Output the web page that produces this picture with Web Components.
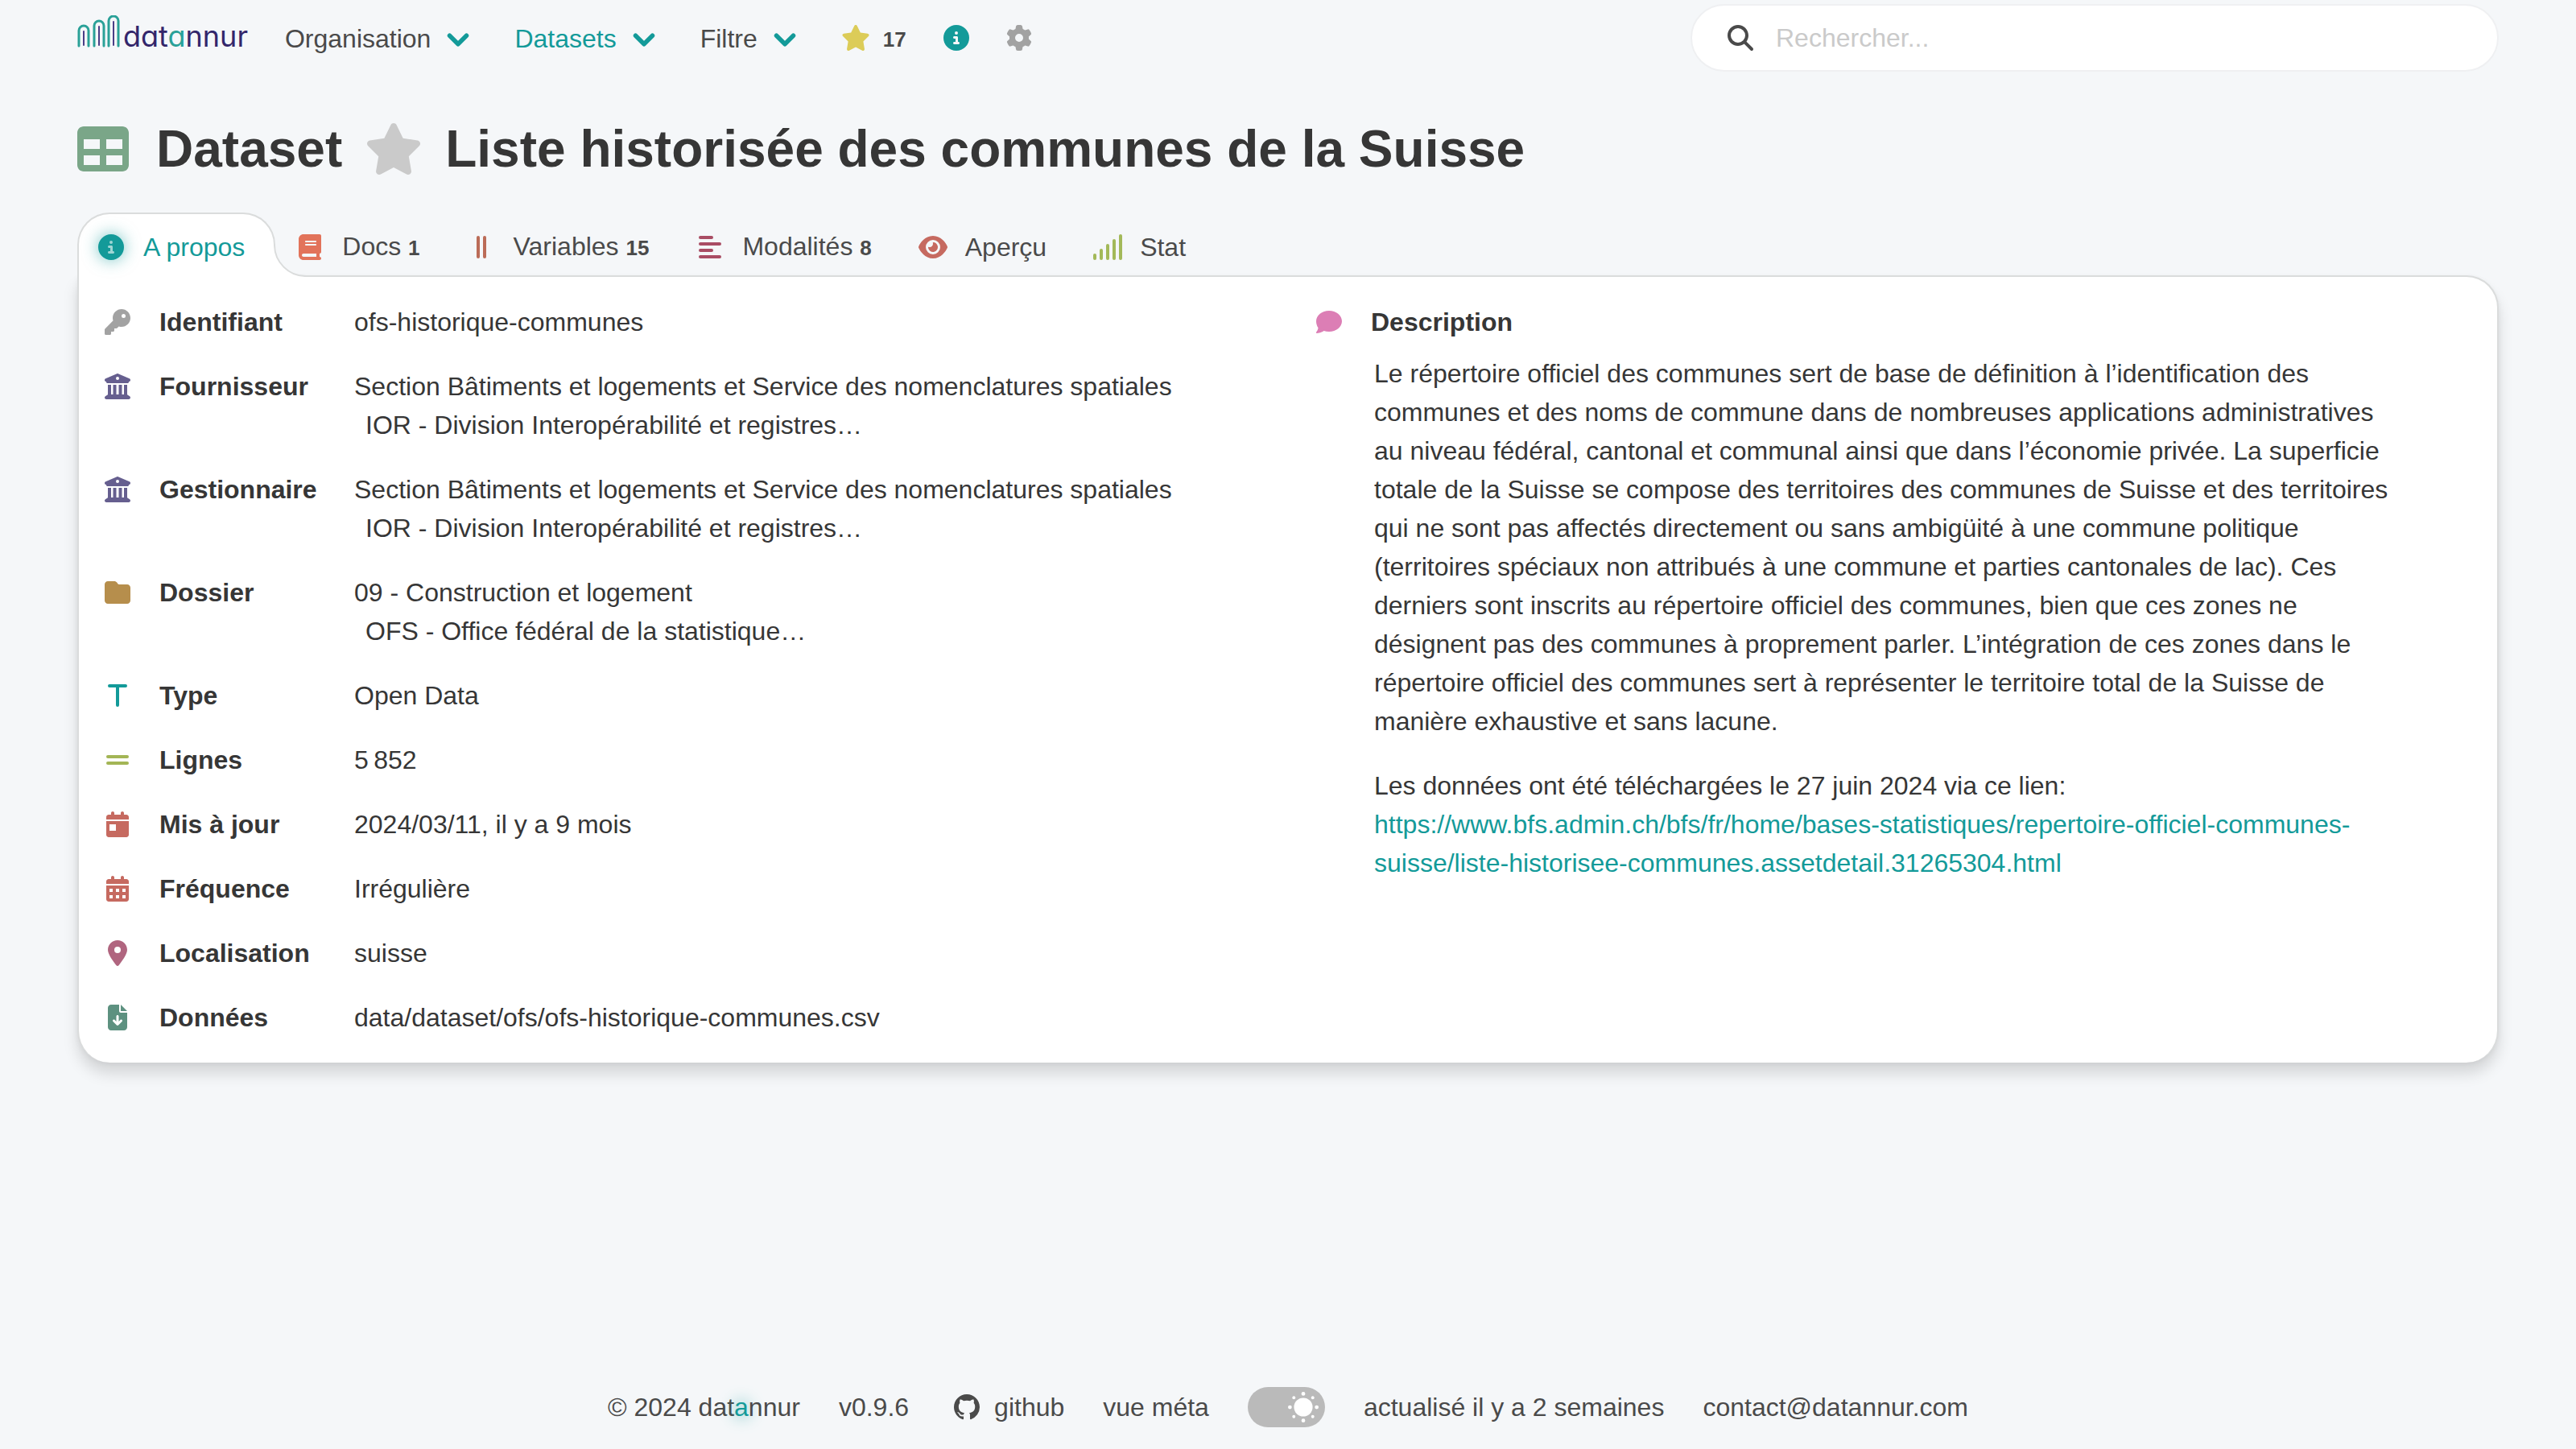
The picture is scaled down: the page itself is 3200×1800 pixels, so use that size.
<!DOCTYPE html>
<html lang="fr">
<head>
<meta charset="utf-8">
<title>datannur | Liste historisée des communes de la Suisse</title>
<style>
  :root {
    --bg: #f5f7f9;
    --text: #363636;
    --soft: #4a4a4a;
    --teal: #139a99;
    --line: #dadcdc;
    --gutter: 96px;
  }
  body {
    margin: 0;
    background: var(--bg);
    color: var(--text);
    font-family: "Liberation Sans", Arial, sans-serif;
    font-size: 32px;
    line-height: 48px;
  }
</style>
</head>
<body>
<dn-app>
  <dn-header slot="header"></dn-header>
  <dn-title kind="Dataset">Liste historisée des communes de la Suisse</dn-title>
  <dn-tabs>
    <dn-tab icon="info" color="#139a99" active>A propos</dn-tab>
    <dn-tab icon="book" color="#e2735a" count="1">Docs</dn-tab>
    <dn-tab icon="columns" color="#bb6c58" count="15">Variables</dn-tab>
    <dn-tab icon="align" color="#a94d64" count="8">Modalités</dn-tab>
    <dn-tab icon="eye" color="#c66a60">Aperçu</dn-tab>
    <dn-tab icon="signal" color="#a3b959">Stat</dn-tab>
  </dn-tabs>
  <dn-card>
    <dn-facts></dn-facts>
    <dn-description heading="Description">
      <p>Le répertoire officiel des communes sert de base de définition à l’identification des communes et des noms de commune dans de nombreuses applications administratives au niveau fédéral, cantonal et communal ainsi que dans l’économie privée. La superficie totale de la Suisse se compose des territoires des communes de Suisse et des territoires qui ne sont pas affectés directement ou sans ambigüité à une commune politique (territoires spéciaux non attribués à une commune et parties cantonales de lac). Ces derniers sont inscrits au répertoire officiel des communes, bien que ces zones ne désignent pas des communes à proprement parler. L’intégration de ces zones dans le répertoire officiel des communes sert à représenter le territoire total de la Suisse de manière exhaustive et sans lacune.</p>
      <p>Les données ont été téléchargées le 27 juin 2024 via ce lien:<br><a href="https://www.bfs.admin.ch/bfs/fr/home/bases-statistiques/repertoire-officiel-communes-suisse/liste-historisee-communes.assetdetail.31265304.html">https://www.bfs.admin.ch/bfs/fr/home/bases-statistiques/repertoire-officiel-communes-suisse/liste-historisee-communes.assetdetail.31265304.html</a></p>
    </dn-description>
  </dn-card>
  <dn-footer slot="footer"></dn-footer>
</dn-app>

<script>
const bar = (x, y, w, h) => `<rect x="${x}" y="${y}" width="${w}" height="${h}" rx="32"/>`;
const calendarTop = 'M128 0c17.7 0 32 14.3 32 32V64H288V32c0-17.7 14.3-32 32-32s32 14.3 32 32V64h48c26.5 0 48 21.5 48 48v48H0V112C0 85.5 21.5 64 48 64H96V32c0-17.7 14.3-32 32-32zM0 192H448V464c0 26.5-21.5 48-48 48H48c-26.5 0-48-21.5-48-48V192z';
const square = (x, y, s) => `M${x} ${y}v${s}h${s}v-${s}z`;

const ICONS = {
  star: [576, '<path d="M316.9 18C311.6 7 300.4 0 288.1 0s-23.4 7-28.8 18L195 150.3 51.4 171.5c-12 1.8-22 10.2-25.7 21.7s-.7 24.2 7.9 32.7L137.8 329 113.2 474.7c-2 12 3 24.2 12.9 31.3s23 8 33.8 2.3l128.3-68.5 128.3 68.5c10.8 5.7 23.9 4.9 33.8-2.3s14.9-19.3 12.9-31.3L438.5 329 542.7 225.9c8.6-8.5 11.7-21.2 7.9-32.7s-13.7-19.9-25.7-21.7L381.2 150.3 316.9 18z"/>'],
  info: [512, '<path d="M256 512A256 256 0 1 0 256 0a256 256 0 1 0 0 512zM216 336h24V272H216c-13.3 0-24-10.7-24-24s10.7-24 24-24h48c13.3 0 24 10.7 24 24v88h8c13.3 0 24 10.7 24 24s-10.7 24-24 24H216c-13.3 0-24-10.7-24-24s10.7-24 24-24zm40-208a32 32 0 1 1 0 64 32 32 0 1 1 0-64z"/>'],
  gear: [512, '<path d="M495.9 166.6c3.2 8.7 .5 18.4-6.4 24.6l-43.3 39.4c1.1 8.3 1.7 16.8 1.7 25.4s-.6 17.1-1.7 25.4l43.3 39.4c6.9 6.2 9.6 15.9 6.4 24.6c-4.4 11.9-9.7 23.3-15.8 34.3l-4.7 8.1c-6.6 11-14 21.4-22.1 31.2c-5.9 7.2-15.7 9.6-24.5 6.8l-55.7-17.7c-13.4 10.3-28.2 18.9-44 25.4l-12.5 57.1c-2 9.1-9 16.3-18.2 17.8c-13.8 2.3-28 3.5-42.5 3.5s-28.7-1.2-42.5-3.5c-9.2-1.5-16.2-8.7-18.2-17.8l-12.5-57.1c-15.8-6.5-30.6-15.1-44-25.4L83.1 425.9c-8.8 2.8-18.6 .3-24.5-6.8c-8.1-9.8-15.5-20.2-22.1-31.2l-4.7-8.1c-6.1-11-11.4-22.4-15.8-34.3c-3.2-8.7-.5-18.4 6.4-24.6l43.3-39.4C64.6 273.1 64 264.6 64 256s.6-17.1 1.7-25.4L22.4 191.2c-6.9-6.2-9.6-15.9-6.4-24.6c4.4-11.9 9.7-23.3 15.8-34.3l4.7-8.1c6.6-11 14-21.4 22.1-31.2c5.9-7.2 15.7-9.6 24.5-6.8l55.7 17.7c13.4-10.3 28.2-18.9 44-25.4l12.5-57.1c2-9.1 9-16.3 18.2-17.8C227.3 1.2 241.5 0 256 0s28.7 1.2 42.5 3.5c9.2 1.5 16.2 8.7 18.2 17.8l12.5 57.1c15.8 6.5 30.6 15.1 44 25.4l55.7-17.7c8.8-2.8 18.6-.3 24.5 6.8c8.1 9.8 15.5 20.2 22.1 31.2l4.7 8.1c6.1 11 11.4 22.4 15.8 34.3zM256 336a80 80 0 1 0 0-160 80 80 0 1 0 0 160z"/>'],
  search: [512, '<path d="M416 208c0 45.9-14.9 88.3-40 122.7L502.6 457.4c12.5 12.5 12.5 32.8 0 45.3s-32.8 12.5-45.3 0L330.7 376c-34.4 25.2-76.8 40-122.7 40C93.1 416 0 322.9 0 208S93.1 0 208 0S416 93.1 416 208zM208 352a144 144 0 1 0 0-288 144 144 0 1 0 0 288z"/>'],
  chevron: [512, '<path d="M88 196L256 364L424 196" fill="none" stroke="currentColor" stroke-width="88" stroke-linecap="round" stroke-linejoin="round"/>'],
  table: [512, `<path d="M0 96C0 60.7 28.7 32 64 32H448c35.3 0 64 28.7 64 64V416c0 35.3-28.7 64-64 64H64c-35.3 0-64-28.7-64-64zM64 160v96H224V160zM288 160v96H448V160zM64 320v96H224V320zM288 320v96H448V320z"/>`],
  book: [448, '<path d="M96 0C43 0 0 43 0 96V416c0 53 43 96 96 96H384h32c17.7 0 32-14.3 32-32s-14.3-32-32-32V384c17.7 0 32-14.3 32-32V32c0-17.7-14.3-32-32-32H384 96zm0 384H352v64H96c-17.7 0-32-14.3-32-32s14.3-32 32-32zm32-240c0-8.8 7.2-16 16-16H336c8.8 0 16 7.2 16 16s-7.2 16-16 16H144c-8.8 0-16-7.2-16-16zm16 48H336c8.8 0 16 7.2 16 16s-7.2 16-16 16H144c-8.8 0-16-7.2-16-16s7.2-16 16-16z"/>'],
  columns: [192, bar(0, 32, 64, 448) + bar(128, 32, 64, 448)],
  align: [448, bar(0, 32, 288, 64) + bar(0, 160, 448, 64) + bar(0, 288, 288, 64) + bar(0, 416, 448, 64)],
  eye: [576, '<path d="M288 32c-80.8 0-145.5 36.8-192.6 80.6C48.6 156 17.3 208 2.5 243.7c-3.3 7.9-3.3 16.7 0 24.6C17.3 304 48.6 356 95.4 399.4C142.5 443.2 207.2 480 288 480s145.5-36.8 192.6-80.6c46.8-43.5 78.1-95.4 93-131.1c3.3-7.9 3.3-16.7 0-24.6c-14.9-35.7-46.2-87.7-93-131.1C433.5 68.8 368.8 32 288 32zM144 256a144 144 0 1 1 288 0 144 144 0 1 1 -288 0zm144-64c0 35.3-28.7 64-64 64c-7.1 0-13.9-1.2-20.3-3.3c-5.5-1.8-11.9 1.6-11.7 7.4c.3 6.9 1.3 13.8 3.2 20.7c13.7 51.2 66.4 81.6 117.6 67.9s81.6-66.4 67.9-117.6c-11.1-41.5-47.8-69.4-88.6-71.1c-5.8-.2-9.2 6.1-7.4 11.7c2.1 6.4 3.3 13.2 3.3 20.3z"/>'],
  signal: [640, bar(32, 384, 64, 128) + bar(160, 288, 64, 224) + bar(288, 192, 64, 320) + bar(416, 96, 64, 416) + bar(544, 0, 64, 512)],
  key: [512, '<path d="M336 352c97.2 0 176-78.8 176-176S433.2 0 336 0S160 78.8 160 176c0 18.7 2.9 36.8 8.3 53.7L7 391c-4.5 4.5-7 10.6-7 17v80c0 13.3 10.7 24 24 24h80c13.3 0 24-10.7 24-24V448h40c13.3 0 24-10.7 24-24V384h40c6.4 0 12.5-2.5 17-7l33.3-33.3c16.9 5.4 35 8.3 53.7 8.3zM376 96a40 40 0 1 1 0 80 40 40 0 1 1 0-80z"/>'],
  bank: [512, '<path d="M243.4 2.6l-224 96c-14 6-21.8 21-18.7 35.8S16.8 160 32 160v8c0 13.3 10.7 24 24 24H456c13.3 0 24-10.7 24-24v-8c15.2 0 28.3-10.7 31.3-25.6s-4.8-29.9-18.7-35.8l-224-96c-8-3.4-17.2-3.4-25.2 0zM128 224H64V420.3c-.6 .3-1.2 .7-1.8 1.1l-48 32c-11.7 7.8-17 22.4-12.9 35.9S17.9 512 32 512H480c14.1 0 26.5-9.2 30.6-22.7s-1.1-28.1-12.9-35.9l-48-32c-.6-.4-1.2-.7-1.8-1.1V224H384V416H344V224H280V416H232V224H168V416H128V224zM256 64a32 32 0 1 1 0 64 32 32 0 1 1 0-64z"/>'],
  folder: [512, '<path d="M64 480H448c35.3 0 64-28.7 64-64V160c0-35.3-28.7-64-64-64H288c-10.1 0-19.6-4.7-25.6-12.8L243.2 57.6C231.1 41.5 212.1 32 192 32H64C28.7 32 0 60.7 0 96V416c0 35.3 28.7 64 64 64z"/>'],
  type: [384, bar(0, 32, 384, 64) + bar(160, 32, 64, 448)],
  equals: [448, bar(0, 160, 448, 64) + bar(0, 288, 448, 64)],
  calendarDay: [448, `<path d="${calendarTop}${square(64, 256, 128)}"/>`],
  calendarDays: [448, `<path d="${calendarTop}${square(64, 256, 64)}${square(192, 256, 64)}${square(320, 256, 64)}${square(64, 384, 64)}${square(192, 384, 64)}${square(320, 384, 64)}"/>`],
  pin: [384, '<path d="M215.7 499.2C267 435 384 279.4 384 192C384 86 298 0 192 0S0 86 0 192c0 87.4 117 243 168.3 307.2c12.3 15.3 35.1 15.3 47.4 0zM192 128a64 64 0 1 1 0 128 64 64 0 1 1 0-128z"/>'],
  file: [384, '<path d="M64 0C28.7 0 0 28.7 0 64V448c0 35.3 28.7 64 64 64H320c35.3 0 64-28.7 64-64V160H256c-17.7 0-32-14.3-32-32V0H64zM256 0V128H384L256 0zM216 232V334.1l31-31c9.4-9.4 24.6-9.4 33.9 0s9.4 24.6 0 33.9l-72 72c-9.4 9.4-24.6 9.4-33.9 0l-72-72c-9.4-9.4-9.4-24.6 0-33.9s24.6-9.4 33.9 0l31 31V232c0-13.3 10.7-24 24-24s24 10.7 24 24z"/>'],
  comment: [512, '<path d="M512 240c0 114.9-114.6 208-256 208c-37.1 0-72.3-6.4-104.1-17.9c-11.9 8.7-31.3 20.6-54.3 30.6C73.6 471.1 44.7 480 16 480c-6.5 0-12.3-3.9-14.8-9.9s-1.1-12.8 3.4-17.4c12-13 29-37 35.6-80.4C14.8 333.9 0 288.7 0 240C0 125.1 114.6 32 256 32s256 93.1 256 208z"/>'],
  github: [512, '<path transform="scale(32)" d="M8 0C3.58 0 0 3.58 0 8c0 3.54 2.29 6.53 5.47 7.59.4.07.55-.17.55-.38 0-.19-.01-.82-.01-1.49-2.01.37-2.53-.49-2.69-.94-.09-.23-.48-.94-.82-1.13-.28-.15-.68-.52-.01-.53.63-.01 1.08.58 1.23.82.72 1.21 1.87.87 2.33.66.07-.52.28-.87.51-1.07-1.78-.2-3.64-.89-3.64-3.95 0-.87.31-1.59.82-2.15-.08-.2-.36-1.02.08-2.12 0 0 .67-.21 2.2.82.64-.18 1.32-.27 2-.27s1.36.09 2 .27c1.53-1.04 2.2-.82 2.2-.82.44 1.1.16 1.92.08 2.12.51.56.82 1.27.82 2.15 0 3.07-1.87 3.75-3.65 3.95.29.25.54.73.54 1.48 0 1.07-.01 1.93-.01 2.2 0 .21.15.46.55.38A8.01 8.01 0 0 0 16 8c0-4.42-3.58-8-8-8z"/>'],
  sun: [512, '<circle cx="256" cy="256" r="156"/><circle cx="256" cy="32" r="32"/><circle cx="256" cy="480" r="32"/><circle cx="32" cy="256" r="32"/><circle cx="480" cy="256" r="32"/><circle cx="98" cy="98" r="26"/><circle cx="414" cy="98" r="26"/><circle cx="98" cy="414" r="26"/><circle cx="414" cy="414" r="26"/>']
};

class Base extends HTMLElement {
  connectedCallback() {
    if (this.shadowRoot) return;
    const t = document.createElement('template');
    t.innerHTML = this.view();
    this.attachShadow({ mode: 'open' }).append(t.content.cloneNode(true));
  }
}

customElements.define('dn-icon', class extends Base {
  view() {
    const [w, shape] = ICONS[this.getAttribute('name')];
    return `<style>
      :host { display: inline-flex; flex: none; justify-content: center; align-items: center; }
      svg { display: block; height: var(--icon-size, 32px); fill: currentColor; fill-rule: evenodd; }
    </style><svg viewBox="0 0 ${w} 512" aria-hidden="true">${shape}</svg>`;
  }
});

customElements.define('dn-app', class extends Base {
  view() {
    return `<style>
      :host { display: flex; flex-direction: column; min-height: 100vh; }
      main { flex: 1; padding: 0 var(--gutter); }
    </style>
    <slot name="header"></slot><main><slot></slot></main><slot name="footer"></slot>`;
  }
});

customElements.define('dn-logo', class extends Base {
  view() {
    const arch = (x, top) => `<path d="M${x} 38V${top + 7}a6 6 0 0 1 12 0V38" stroke="#2aa198" stroke-width="3"/><path d="M${x + 6} 37V${top + 8}" stroke="#4a3d86" stroke-width="2"/>`;
    return `<style>
      :host { display: block; }
      a { display: flex; align-items: center; gap: 3px; padding-bottom: 4px; color: #33266b; text-decoration: none; }
      svg { display: block; width: 54px; height: 40px; margin-bottom: 12px; fill: none; stroke-linecap: round; }
      span { font: 400 36px/40px Inter, sans-serif; font-feature-settings: "cv11"; }
      i { font-style: normal; color: #2aa198; }
    </style>
    <a href="#accueil"><svg viewBox="0 0 54 40" aria-hidden="true">${arch(2, 12)}${arch(21, 6)}${arch(39, 0)}</svg><span>dat<i>a</i>nnur</span></a>`;
  }
});

customElements.define('dn-menu', class extends Base {
  view() {
    return `<style>
      :host { display: block; }
      button { display: flex; align-items: center; gap: 18px; padding: 2px 0 0; border: 0; background: none; color: inherit; font: inherit; cursor: pointer; }
      dn-icon { color: var(--teal); }
    </style><button type="button" aria-haspopup="true"><slot></slot><dn-icon name="chevron"></dn-icon></button>`;
  }
});

customElements.define('dn-header', class extends Base {
  view() {
    return `<style>
      :host { display: flex; align-items: center; justify-content: space-between; height: 94px; padding: 0 var(--gutter); color: var(--soft); }
      nav { display: flex; align-items: center; gap: 46px; }
      .menus { display: flex; align-items: center; gap: 54px; }
      .current { color: var(--teal); }
      a { display: flex; align-items: center; gap: 16px; color: inherit; text-decoration: none; }
      b { font-size: 26px; line-height: 48px; padding-top: 4px; }
      .fav dn-icon { color: #dccc58; }
      .about { color: var(--teal); }
      button { display: flex; padding: 0; border: 0; background: none; color: #a2a2a2; cursor: pointer; }
      form { box-sizing: border-box; display: flex; align-items: center; gap: 28px; width: 1004px; height: 84px; padding: 0 44px; background: #fff; border: 2px solid #eff0f2; border-radius: 42px; }
      label { display: flex; }
      input { flex: 1; min-width: 0; padding: 0; border: 0; outline: 0; background: none; color: inherit; font: inherit; }
      input::placeholder { color: #cacaca; opacity: 1; }
    </style>
    <nav>
      <dn-logo></dn-logo>
      <div class="menus">
        <dn-menu>Organisation</dn-menu>
        <dn-menu class="current">Datasets</dn-menu>
        <dn-menu>Filtre</dn-menu>
        <a class="fav" href="#favoris"><dn-icon name="star"></dn-icon><b>17</b></a>
      </div>
      <a class="about" href="#a-propos" aria-label="A propos"><dn-icon name="info"></dn-icon></a>
      <button type="button" aria-label="Options"><dn-icon name="gear"></dn-icon></button>
    </nav>
    <form role="search">
      <label for="q" aria-label="Rechercher"><dn-icon name="search"></dn-icon></label>
      <input id="q" type="text" placeholder="Rechercher...">
    </form>`;
  }
});

customElements.define('dn-title', class extends Base {
  view() {
    return `<style>
      :host { display: block; padding: 43px 0 31px; }
      h1 { display: flex; align-items: center; gap: 28px; margin: 0; font-size: 64px; line-height: 96px; }
      dn-icon { --icon-size: 64px; color: #7aa688; }
      .kind { padding-left: 6px; }
      button { display: flex; padding: 0; border: 0; background: none; color: #cacaca; cursor: pointer; }
      button dn-icon { color: inherit; }
    </style>
    <h1><dn-icon name="table"></dn-icon><span class="kind">${this.getAttribute('kind')}</span>
    <button type="button" aria-label="Ajouter aux favoris"><dn-icon name="star"></dn-icon></button><span><slot></slot></span></h1>`;
  }
});

customElements.define('dn-tabs', class extends Base {
  view() {
    return `<style>:host { display: flex; position: relative; z-index: 1; margin-bottom: -2px; }</style><slot></slot>`;
  }
});

customElements.define('dn-tab', class extends Base {
  view() {
    const active = this.hasAttribute('active');
    const count = this.getAttribute('count');
    return `<style>
      :host { display: block; color: var(--soft); }
      button { box-sizing: border-box; position: relative; display: flex; align-items: center; gap: 20px; height: 80px; padding: 6px 36px 0 20px; border: 0; background: none; color: inherit; font: inherit; cursor: pointer; }
      .icon { width: 40px; color: ${this.getAttribute('color')}; }
      b { font-size: 26px; }
      :host([active]) { color: var(--teal); }
      :host([active]) button { padding: 4px 36px 0 20px; margin-right: 3px; background: #fff; border: 2px solid var(--line); border-bottom: 0; border-radius: 40px 40px 0 0; }
      :host([active]) .icon { border-radius: 50%; background: radial-gradient(circle, #9ed6d4 8px, transparent 9px); filter: drop-shadow(0 0 10px rgba(19, 154, 153, .6)); }
      .curve { position: absolute; left: 100%; bottom: 0; display: block; }
    </style>
    <button type="button" role="tab" aria-selected="${active}"><dn-icon class="icon" name="${this.getAttribute('icon')}"></dn-icon>
      <span><slot></slot>${count ? ` <b>${count}</b>` : ''}</span>
      ${active ? '<svg class="curve" width="41" height="41" viewBox="0 0 41 41" aria-hidden="true"><path d="M0 0H1A39 39 0 0 0 40 40V41H0z" fill="#fff"/><path d="M1 0A39 39 0 0 0 41 40" fill="none" stroke="#dadcdc" stroke-width="2"/></svg>' : ''}
    </button>`;
  }
});

customElements.define('dn-card', class extends Base {
  view() {
    return `<style>
      :host { display: grid; grid-template-columns: minmax(0, 1fr) minmax(0, 1fr); gap: 38px; padding: 16px; background: #fff; border: 2px solid var(--line); border-bottom: 0; border-radius: 0 40px 40px 40px; box-shadow: 0 14px 18px rgba(0, 0, 0, .13), 0 2px 6px rgba(0, 0, 0, .05); }
    </style><slot></slot>`;
  }
});

const FACTS = [
  ['key', '#a2a2a2', 'Identifiant', 'ofs-historique-communes'],
  ['bank', '#665f8f', 'Fournisseur', 'Section Bâtiments et logements et Service des nomenclatures spatiales', 'IOR - Division Interopérabilité et registres…'],
  ['bank', '#665f8f', 'Gestionnaire', 'Section Bâtiments et logements et Service des nomenclatures spatiales', 'IOR - Division Interopérabilité et registres…'],
  ['folder', '#b68e4c', 'Dossier', '09 - Construction et logement', 'OFS - Office fédéral de la statistique…'],
  ['type', '#139a99', 'Type', 'Open Data'],
  ['equals', '#a3b555', 'Lignes', '5\u202f852'],
  ['calendarDay', '#c66a60', 'Mis à jour', '2024/03/11, il y a 9 mois'],
  ['calendarDays', '#c66a60', 'Fréquence', 'Irrégulière'],
  ['pin', '#b0657f', 'Localisation', 'suisse'],
  ['file', '#5d9180', 'Données', 'data/dataset/ofs/ofs-historique-communes.csv']
];

customElements.define('dn-facts', class extends Base {
  view() {
    const rows = FACTS.map(([icon, color, label, value, sub]) => `<tr>
      <td class="icon" style="color:${color}"><dn-icon name="${icon}"></dn-icon></td>
      <th scope="row">${label}</th>
      <td>${value}${sub ? `<div class="sub">${sub}</div>` : ''}</td></tr>`).join('');
    return `<style>
      :host { display: block; }
      table { width: 100%; border-collapse: collapse; table-layout: fixed; }
      .c-icon { width: 64px; }
      .c-label { width: 262px; }
      td, th { padding: 16px 0; vertical-align: top; text-align: left; }
      .icon dn-icon { display: flex; height: 48px; }
      th { padding-left: 20px; padding-right: 20px; }
      .sub { padding-left: 14px; }
    </style><table><colgroup><col class="c-icon"><col class="c-label"><col></colgroup>${rows}</table>`;
  }
});

customElements.define('dn-description', class extends Base {
  view() {
    return `<style>
      :host { display: block; padding: 16px 0; }
      h2 { display: flex; align-items: center; gap: 20px; margin: 0 0 16px; font-size: 32px; line-height: 48px; }
      dn-icon { width: 64px; color: #dc7eb5; }
      .body { padding: 0 96px 0 88px; }
      ::slotted(p) { margin: 0 0 32px; }
    </style><h2><dn-icon name="comment"></dn-icon>${this.getAttribute('heading')}</h2><div class="body"><slot></slot></div>`;
  }
  connectedCallback() {
    super.connectedCallback();
    this.querySelectorAll('a').forEach(a => { a.style.color = 'var(--teal)'; a.style.textDecoration = 'none'; });
  }
});

customElements.define('dn-switch', class extends Base {
  view() {
    return `<style>
      :host { display: block; }
      label { position: relative; display: flex; }
      input { appearance: none; width: 96px; height: 50px; margin: 0; border-radius: 25px; background: #bababa; cursor: pointer; }
      dn-icon { --icon-size: 38px; position: absolute; right: 8px; top: 6px; color: #fff; pointer-events: none; }
    </style><label><input type="checkbox" aria-label="Mode sombre"><dn-icon name="sun"></dn-icon></label>`;
  }
});

customElements.define('dn-footer', class extends Base {
  view() {
    return `<style>
      :host { display: flex; justify-content: center; align-items: center; gap: 48px; height: 104px; color: var(--soft); }
      a { display: flex; align-items: center; gap: 18px; color: inherit; text-decoration: none; }
      .github { padding-left: 8px; }
      i { font-style: normal; color: var(--teal); text-shadow: 0 0 20px var(--teal); }
    </style>
    <span>© 2024 dat<i>a</i>nnur</span><span>v0.9.6</span>
    <a class="github" href="https://github.com/datannur/datannur"><dn-icon name="github"></dn-icon>github</a>
    <a href="#meta">vue méta</a><dn-switch></dn-switch>
    <span>actualisé il y a 2 semaines</span>
    <a href="mailto:contact@datannur.com">contact@datannur.com</a>`;
  }
});
</script>
</body>
</html>
